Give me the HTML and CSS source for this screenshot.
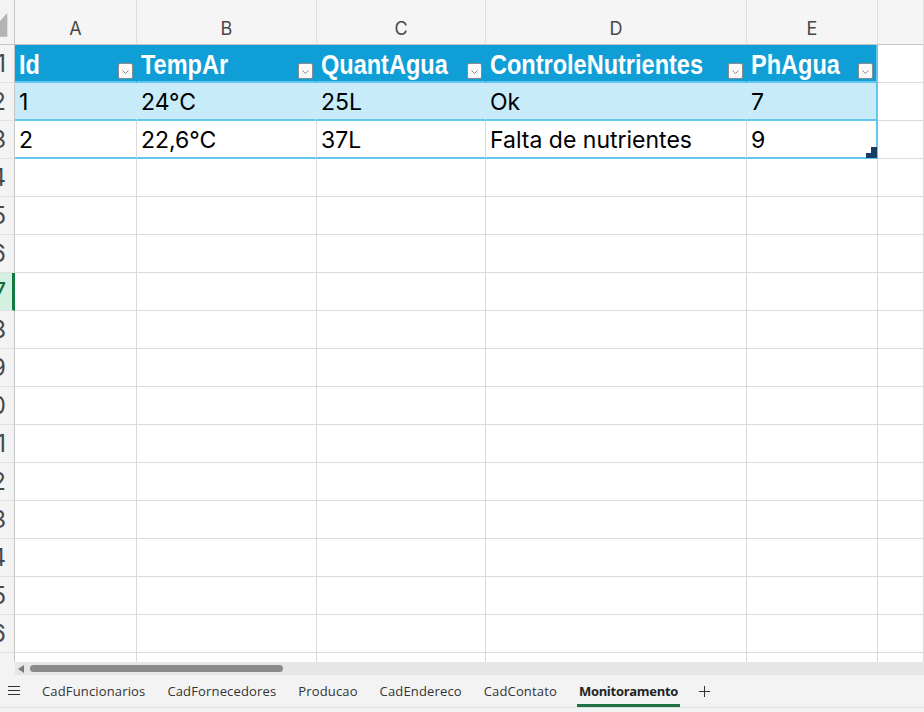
FILE: index.html
```html
<!DOCTYPE html>
<html lang="pt">
<head>
<meta charset="utf-8">
<title>Monitoramento</title>
<link rel="stylesheet" href="styles.css">
</head>
<body>
<div class="app">
  <div class="grid">
    <div class="corner"><svg width="14" height="44" viewBox="0 0 14 44"><polygon points="7.3,13 7.3,36.7 0,36.7 0,21" fill="#b4b4b4"/></svg></div>
    <div class="col">A</div><div class="col">B</div><div class="col">C</div><div class="col">D</div><div class="col">E</div><div class="col"></div>

    <div class="rh"><span>1</span></div>
    <div class="th"><span class="ht">Id</span><i class="fb"><svg width="7" height="4" viewBox="0 0 7 4"><path d="M0.5 0.5 L3.5 3.5 L6.5 0.5" fill="none" stroke="#6b6b6b" stroke-width="0.8"/></svg></i></div>
    <div class="th"><span class="ht">TempAr</span><i class="fb"><svg width="7" height="4" viewBox="0 0 7 4"><path d="M0.5 0.5 L3.5 3.5 L6.5 0.5" fill="none" stroke="#6b6b6b" stroke-width="0.8"/></svg></i></div>
    <div class="th"><span class="ht">QuantAgua</span><i class="fb"><svg width="7" height="4" viewBox="0 0 7 4"><path d="M0.5 0.5 L3.5 3.5 L6.5 0.5" fill="none" stroke="#6b6b6b" stroke-width="0.8"/></svg></i></div>
    <div class="th"><span class="ht">ControleNutrientes</span><i class="fb"><svg width="7" height="4" viewBox="0 0 7 4"><path d="M0.5 0.5 L3.5 3.5 L6.5 0.5" fill="none" stroke="#6b6b6b" stroke-width="0.8"/></svg></i></div>
    <div class="th e"><span class="ht">PhAgua</span><i class="fb"><svg width="7" height="4" viewBox="0 0 7 4"><path d="M0.5 0.5 L3.5 3.5 L6.5 0.5" fill="none" stroke="#6b6b6b" stroke-width="0.8"/></svg></i></div>
    <div class="c"></div>

    <div class="rh"><span>2</span></div>
    <div class="td alt">1</div><div class="td alt">24°C</div><div class="td alt">25L</div><div class="td alt">Ok</div><div class="td alt e">7</div>
    <div class="c"></div>

    <div class="rh"><span>3</span></div>
    <div class="td">2</div><div class="td">22,6°C</div><div class="td">37L</div><div class="td">Falta de nutrientes</div><div class="td e sel">9<svg class="handle" width="11" height="11" viewBox="0 0 11 11"><polygon points="5,0 11,0 11,11 0,11 0,6 5,6" fill="#123f63"/></svg></div>
    <div class="c"></div>

    <div class="rh"><span>4</span></div><div class="c"></div><div class="c"></div><div class="c"></div><div class="c"></div><div class="c"></div><div class="c"></div>
    <div class="rh"><span>5</span></div><div class="c"></div><div class="c"></div><div class="c"></div><div class="c"></div><div class="c"></div><div class="c"></div>
    <div class="rh"><span>6</span></div><div class="c"></div><div class="c"></div><div class="c"></div><div class="c"></div><div class="c"></div><div class="c"></div>
    <div class="rh on"><span>7</span></div><div class="c"></div><div class="c"></div><div class="c"></div><div class="c"></div><div class="c"></div><div class="c"></div>
    <div class="rh"><span>8</span></div><div class="c"></div><div class="c"></div><div class="c"></div><div class="c"></div><div class="c"></div><div class="c"></div>
    <div class="rh"><span>9</span></div><div class="c"></div><div class="c"></div><div class="c"></div><div class="c"></div><div class="c"></div><div class="c"></div>
    <div class="rh"><span>10</span></div><div class="c"></div><div class="c"></div><div class="c"></div><div class="c"></div><div class="c"></div><div class="c"></div>
    <div class="rh"><span>11</span></div><div class="c"></div><div class="c"></div><div class="c"></div><div class="c"></div><div class="c"></div><div class="c"></div>
    <div class="rh"><span>12</span></div><div class="c"></div><div class="c"></div><div class="c"></div><div class="c"></div><div class="c"></div><div class="c"></div>
    <div class="rh"><span>13</span></div><div class="c"></div><div class="c"></div><div class="c"></div><div class="c"></div><div class="c"></div><div class="c"></div>
    <div class="rh"><span>14</span></div><div class="c"></div><div class="c"></div><div class="c"></div><div class="c"></div><div class="c"></div><div class="c"></div>
    <div class="rh"><span>15</span></div><div class="c"></div><div class="c"></div><div class="c"></div><div class="c"></div><div class="c"></div><div class="c"></div>
    <div class="rh"><span>16</span></div><div class="c"></div><div class="c"></div><div class="c"></div><div class="c"></div><div class="c"></div><div class="c"></div>
    <div class="rh"><span>17</span></div><div class="c"></div><div class="c"></div><div class="c"></div><div class="c"></div><div class="c"></div><div class="c"></div>
  </div>

  <div class="hs">
    <div class="hs-left"></div>
    <div class="track">
      <svg class="arrow" width="6" height="8" viewBox="0 0 6 8"><polygon points="6,0 6,8 0,4" fill="#7a7a7a"/></svg>
      <div class="thumb"></div>
    </div>
  </div>

  <div class="tabs">
    <div class="menu"><svg width="12" height="10" viewBox="0 0 12 10"><path d="M0 0.5 H12 M0 4.5 H12 M0 8.5 H12" stroke="#333" stroke-width="1"/></svg></div>
    <div class="tablist">
      <div class="tab">CadFuncionarios</div>
      <div class="tab">CadFornecedores</div>
      <div class="tab">Producao</div>
      <div class="tab">CadEndereco</div>
      <div class="tab">CadContato</div>
      <div class="tab active">Monitoramento</div>
      <div class="add"><svg width="11" height="11" viewBox="0 0 11 11"><path d="M5.5 0 V11 M0 5.5 H11" stroke="#333" stroke-width="1"/></svg></div>
    </div>
  </div>
</div>
</body>
</html>
```

FILE: styles.css
```css
* { box-sizing: border-box; margin: 0; padding: 0; }

html, body {
  width: 924px;
  height: 712px;
  overflow: hidden;
}

body {
  background: #f3f3f3;
  font-family: Inter, "Liberation Sans", sans-serif;
}

.app {
  display: flex;
  flex-direction: column;
  height: 712px;
}

/* ---------- grid ---------- */
.grid {
  flex: none;
  height: 662px;
  overflow: hidden;
  background: #fff;
  display: grid;
  grid-template-columns: 15px 122px 180px 169px 261px 131px 1fr;
  grid-template-rows: 45px repeat(17, 38px);
}

.corner {
  background: #f3f3f3;
  border-right: 1px solid #c6c6c6;
  border-bottom: 1px solid #c6c6c6;
}
.corner svg { display: block; }

.col {
  background: #f5f5f5;
  border-right: 1px solid #dedede;
  border-bottom: 1px solid #c6c6c6;
  display: flex;
  align-items: flex-end;
  justify-content: center;
  padding-bottom: 6px;
  font-size: 18px;
  line-height: 18px;
  color: #474747;
}

.rh {
  background: #f3f3f3;
  border-right: 1px solid #c6c6c6;
  border-bottom: 1px solid #e1e1e1;
  display: flex;
  align-items: center;
  justify-content: flex-end;
  padding-right: 8px;
  overflow: hidden;
  white-space: nowrap;
  font-size: 24px;
  color: #474747;
}
.rh span { flex: none; }
.rh.on {
  background: #d3f0e0;
  border-right: 3px solid #107c41;
  padding-right: 6px;
  color: #0e6b37;
}

.c {
  border-right: 1px solid #dadada;
  border-bottom: 1px solid #dadada;
}

/* table header */
.th {
  background: #0f9ed5;
  color: #fff;
  font-family: "Liberation Sans", Arial, sans-serif;
  font-weight: bold;
  font-size: 28px;
  line-height: 28px;
  white-space: nowrap;
  border-right: 1px solid #0f9ed5;
  border-bottom: 2px solid #62c6ef;
  display: flex;
  align-items: flex-end;
  padding: 0 3px 2px 4px;
}
.ht {
  flex: 1;
  min-width: 0;
  transform: scaleX(0.84);
  transform-origin: left bottom;
}

.fb {
  flex: none;
  width: 15px;
  height: 16px;
  border: 1px solid #8c8c8c;
  border-radius: 2px;
  background: #fafafa;
  display: flex;
  align-items: center;
  justify-content: center;
  padding-top: 2px;
}
.fb svg { display: block; }

/* table body */
.td {
  font-size: 23px;
  line-height: 23px;
  color: #000;
  white-space: nowrap;
  display: flex;
  align-items: flex-end;
  padding: 0 4px 5px 4px;
  border-right: 1px solid #dadada;
  border-bottom: 2px solid #62c6ef;
}
.td.alt {
  background: #c8ebfa;
  border-right-color: #c8ebfa;
}
.th.e, .td.e {
  border-right: 2px solid #62c6ef;
}
.td.sel { position: relative; }
.handle {
  position: absolute;
  right: -1px;
  bottom: -1px;
  display: block;
}

/* ---------- horizontal scrollbar ---------- */
.hs {
  flex: none;
  height: 13px;
  display: flex;
}
.hs-left {
  width: 15px;
  background: #f3f3f3;
}
.track {
  flex: 1;
  background: #e6e6e6;
  display: flex;
  align-items: center;
  padding-left: 3px;
}
.arrow { display: block; flex: none; }
.thumb {
  margin-left: 6px;
  width: 253px;
  height: 7px;
  border-radius: 4px;
  background: #8a8a8a;
}

/* ---------- sheet tabs ---------- */
.tabs {
  flex: none;
  height: 33px;
  display: flex;
  align-items: stretch;
  background: #f3f3f3;
  border-bottom: 1px solid #e0e0e0;
  font-family: "Open Sans", "Noto Sans", sans-serif;
  font-size: 13px;
  color: #333;
}
.menu {
  width: 28px;
  display: flex;
  align-items: center;
  justify-content: center;
}
.menu svg { display: block; }
.tablist {
  margin-left: 12px;
  display: flex;
  align-items: stretch;
  gap: 18px;
}
.tab {
  display: flex;
  align-items: center;
  padding: 3px 2px 0 2px;
  border-bottom: 3px solid transparent;
  white-space: nowrap;
  letter-spacing: 0.15px;
}
.tab.active {
  font-weight: bold;
  letter-spacing: -0.3px;
  color: #242424;
  border-bottom-color: #1e7145;
}
.add {
  display: flex;
  align-items: center;
  padding-left: 1px;
}
.add svg { display: block; }
```
